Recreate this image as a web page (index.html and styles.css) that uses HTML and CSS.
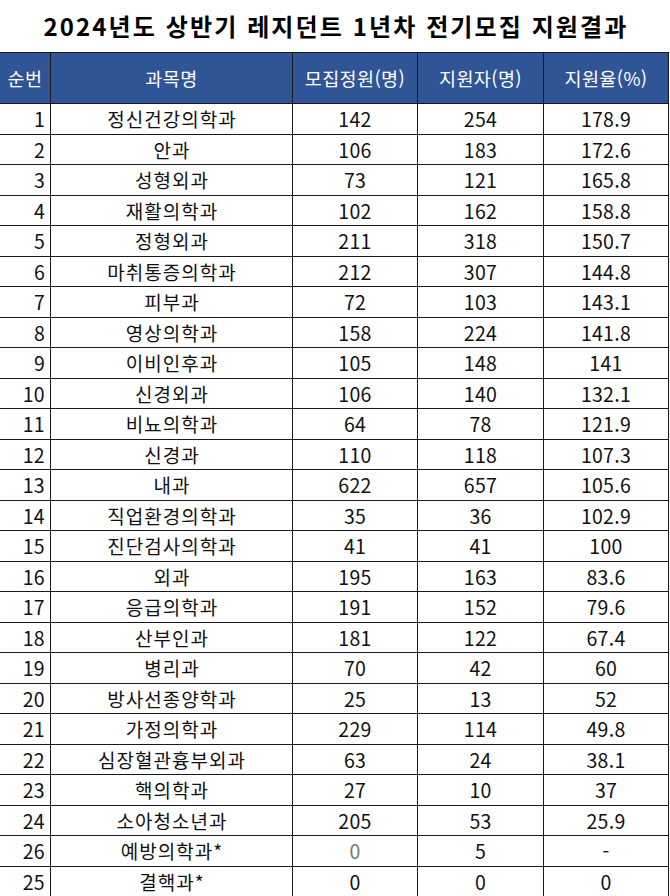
FILE: index.html
```html
<!DOCTYPE html>
<html lang="ko">
<head>
<meta charset="utf-8">
<link rel="stylesheet" href="styles.css">
</head>
<body>
<div class="page">
  <h1 class="title">2024년도 상반기 레지던트 1년차 전기모집 지원결과</h1>
  <div class="grid">
    <div class="h">순번</div><div class="h">과목명</div><div class="h">모집정원(명)</div><div class="h">지원자(명)</div><div class="h">지원율(%)</div>
    <div class="n">1</div><div class="s">정신건강의학과</div><div class="c">142</div><div class="c">254</div><div class="c">178.9</div>
    <div class="n">2</div><div class="s">안과</div><div class="c">106</div><div class="c">183</div><div class="c">172.6</div>
    <div class="n">3</div><div class="s">성형외과</div><div class="c">73</div><div class="c">121</div><div class="c">165.8</div>
    <div class="n">4</div><div class="s">재활의학과</div><div class="c">102</div><div class="c">162</div><div class="c">158.8</div>
    <div class="n">5</div><div class="s">정형외과</div><div class="c">211</div><div class="c">318</div><div class="c">150.7</div>
    <div class="n">6</div><div class="s">마취통증의학과</div><div class="c">212</div><div class="c">307</div><div class="c">144.8</div>
    <div class="n">7</div><div class="s">피부과</div><div class="c">72</div><div class="c">103</div><div class="c">143.1</div>
    <div class="n">8</div><div class="s">영상의학과</div><div class="c">158</div><div class="c">224</div><div class="c">141.8</div>
    <div class="n">9</div><div class="s">이비인후과</div><div class="c">105</div><div class="c">148</div><div class="c">141</div>
    <div class="n">10</div><div class="s">신경외과</div><div class="c">106</div><div class="c">140</div><div class="c">132.1</div>
    <div class="n">11</div><div class="s">비뇨의학과</div><div class="c">64</div><div class="c">78</div><div class="c">121.9</div>
    <div class="n">12</div><div class="s">신경과</div><div class="c">110</div><div class="c">118</div><div class="c">107.3</div>
    <div class="n">13</div><div class="s">내과</div><div class="c">622</div><div class="c">657</div><div class="c">105.6</div>
    <div class="n">14</div><div class="s">직업환경의학과</div><div class="c">35</div><div class="c">36</div><div class="c">102.9</div>
    <div class="n">15</div><div class="s">진단검사의학과</div><div class="c">41</div><div class="c">41</div><div class="c">100</div>
    <div class="n">16</div><div class="s">외과</div><div class="c">195</div><div class="c">163</div><div class="c">83.6</div>
    <div class="n">17</div><div class="s">응급의학과</div><div class="c">191</div><div class="c">152</div><div class="c">79.6</div>
    <div class="n">18</div><div class="s">산부인과</div><div class="c">181</div><div class="c">122</div><div class="c">67.4</div>
    <div class="n">19</div><div class="s">병리과</div><div class="c">70</div><div class="c">42</div><div class="c">60</div>
    <div class="n">20</div><div class="s">방사선종양학과</div><div class="c">25</div><div class="c">13</div><div class="c">52</div>
    <div class="n">21</div><div class="s">가정의학과</div><div class="c">229</div><div class="c">114</div><div class="c">49.8</div>
    <div class="n">22</div><div class="s">심장혈관흉부외과</div><div class="c">63</div><div class="c">24</div><div class="c">38.1</div>
    <div class="n">23</div><div class="s">핵의학과</div><div class="c">27</div><div class="c">10</div><div class="c">37</div>
    <div class="n">24</div><div class="s">소아청소년과</div><div class="c">205</div><div class="c">53</div><div class="c">25.9</div>
    <div class="n">26</div><div class="s">예방의학과*</div><div class="c faint">0</div><div class="c">5</div><div class="c">-</div>
    <div class="n">25</div><div class="s">결핵과*</div><div class="c">0</div><div class="c">0</div><div class="c">0</div>
  </div>
</div>
</body>
</html>
```

FILE: styles.css
```css
html, body {
  margin: 0;
  padding: 0;
  background: #fff;
}
body {
  width: 670px;
  height: 896px;
  overflow: hidden;
  font-family: "Noto Sans CJK KR", "Noto Sans", sans-serif;
  color: #111;
}
.page {
  display: flex;
  flex-direction: column;
}
.title {
  margin: 0;
  height: 52px;
  line-height: 52px;
  text-align: center;
  font-size: 24px;
  font-weight: 700;
  color: #000;
  letter-spacing: 2.1px;
  padding-left: 2px;
}
.grid {
  display: grid;
  grid-template-columns: 51px 242px 125px 126px 125px;
  grid-template-rows: 51px;
  grid-auto-rows: 30.5px;
  width: 669px;
  border-top: 1px solid #1a1a1a;
}
.grid > div {
  box-sizing: border-box;
  border-right: 1px solid #1a1a1a;
  border-bottom: 1px solid #1a1a1a;
  display: flex;
  align-items: center;
  justify-content: center;
  font-size: 19.5px;
  letter-spacing: 0.3px;
  line-height: 1;
  white-space: nowrap;
}
.grid > .h {
  background: #2f5597;
  color: #fff;
  font-size: 18.5px;
  letter-spacing: 0.4px;
}
.grid > .s {
  font-size: 19px;
  letter-spacing: 1px;
  padding-left: 1px;
}
.grid > .n {
  justify-content: flex-end;
  padding-right: 5px;
  letter-spacing: 0.3px;
}
.grid > .faint {
  color: #777;
}
```
